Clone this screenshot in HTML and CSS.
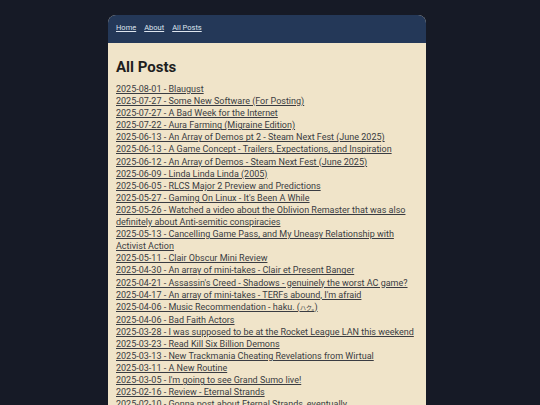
FILE: index.html
```html
<!DOCTYPE html>
<html lang="en">
<head>
    <meta charset="UTF-8">
    <meta name="viewport" content="width=device-width, initial-scale=1.0">
    <title>All Posts</title>
    <link rel="stylesheet" href="styles.css">
</head>
<body>
    <div class="page">
        <nav class="topbar">
            <a href="#">Home</a>
            <a href="#">About</a>
            <a href="#">All Posts</a>
        </nav>
        <main class="content">
            <h1>All Posts</h1>
            <ul class="posts">
                <li><a href="#">2025-08-01 - Blaugust</a></li>
                <li><a href="#">2025-07-27 - Some New Software (For Posting)</a></li>
                <li><a href="#">2025-07-27 - A Bad Week for the Internet</a></li>
                <li><a href="#">2025-07-22 - Aura Farming (Migraine Edition)</a></li>
                <li><a href="#">2025-06-13 - An Array of Demos pt 2 - Steam Next Fest (June 2025)</a></li>
                <li><a href="#">2025-06-13 - A Game Concept - Trailers, Expectations, and Inspiration</a></li>
                <li><a href="#">2025-06-12 - An Array of Demos - Steam Next Fest (June 2025)</a></li>
                <li><a href="#">2025-06-09 - Linda Linda Linda (2005)</a></li>
                <li><a href="#">2025-06-05 - RLCS Major 2 Preview and Predictions</a></li>
                <li><a href="#">2025-05-27 - Gaming On Linux - It's Been A While</a></li>
                <li><a href="#">2025-05-26 - Watched a video about the Oblivion Remaster that was also definitely about Anti-semitic conspiracies</a></li>
                <li><a href="#">2025-05-13 - Cancelling Game Pass, and My Uneasy Relationship with Activist Action</a></li>
                <li><a href="#">2025-05-11 - Clair Obscur Mini Review</a></li>
                <li><a href="#">2025-04-30 - An array of mini-takes - Clair et Present Banger</a></li>
                <li><a href="#">2025-04-21 - Assassin's Creed - Shadows - genuinely the worst AC game?</a></li>
                <li><a href="#">2025-04-17 - An array of mini-takes - TERFs abound, I'm afraid</a></li>
                <li><a href="#">2025-04-06 - Music Recommendation - haku. (<span class="jp">ハク。</span>)</a></li>
                <li><a href="#">2025-04-06 - Bad Faith Actors</a></li>
                <li><a href="#">2025-03-28 - I was supposed to be at the Rocket League LAN this weekend</a></li>
                <li><a href="#">2025-03-23 - Read Kill Six Billion Demons</a></li>
                <li><a href="#">2025-03-13 - New Trackmania Cheating Revelations from Wirtual</a></li>
                <li><a href="#">2025-03-11 - A New Routine</a></li>
                <li><a href="#">2025-03-05 - I'm going to see Grand Sumo live!</a></li>
                <li><a href="#">2025-02-16 - Review - Eternal Strands</a></li>
                <li><a href="#">2025-02-10 - Gonna post about Eternal Strands, eventually</a></li>
                <li><a href="#">2025-02-03 - Blog Plans</a></li>
            </ul>
        </main>
    </div>
</body>
</html>
```

FILE: styles.css
```css
:root {
    --bg-color: #161a26;
    --bar-color: #243858;
    --paper-color: #f0e4c9;
    --text-color: #3a3c42;
    --nav-color: #dde4ee;
}

body {
    margin: 0;
    padding-right: 6px;
    background-color: var(--bg-color);
    font-family: Roboto, 'Liberation Sans', sans-serif;
    color: var(--text-color);
}
.page {
    width: 318px;
    margin: 15px auto 0;
    border-radius: 8px 8px 0 0;
    overflow: hidden;
    background: var(--paper-color);
}
.topbar {
    display: flex;
    gap: 8px;
    background: var(--bar-color);
    padding: 9px 8px 11px;
    font-size: 7.5px;
    line-height: 8px;
}
.topbar a {
    color: var(--nav-color);
}
.content {
    padding: 8px 8px 10px;
}
h1 {
    font-size: 15px;
    font-weight: bold;
    color: #1e1e1e;
    margin: 7px 0 7px;
}
.posts {
    list-style: none;
    margin: 0;
    padding: 0;
    font-size: 9px;
    line-height: 12.1px;
}
.posts a {
    color: var(--text-color);
}
.jp {
    font-family: 'Noto Sans CJK JP', sans-serif;
    font-size: 6px;
}
```
